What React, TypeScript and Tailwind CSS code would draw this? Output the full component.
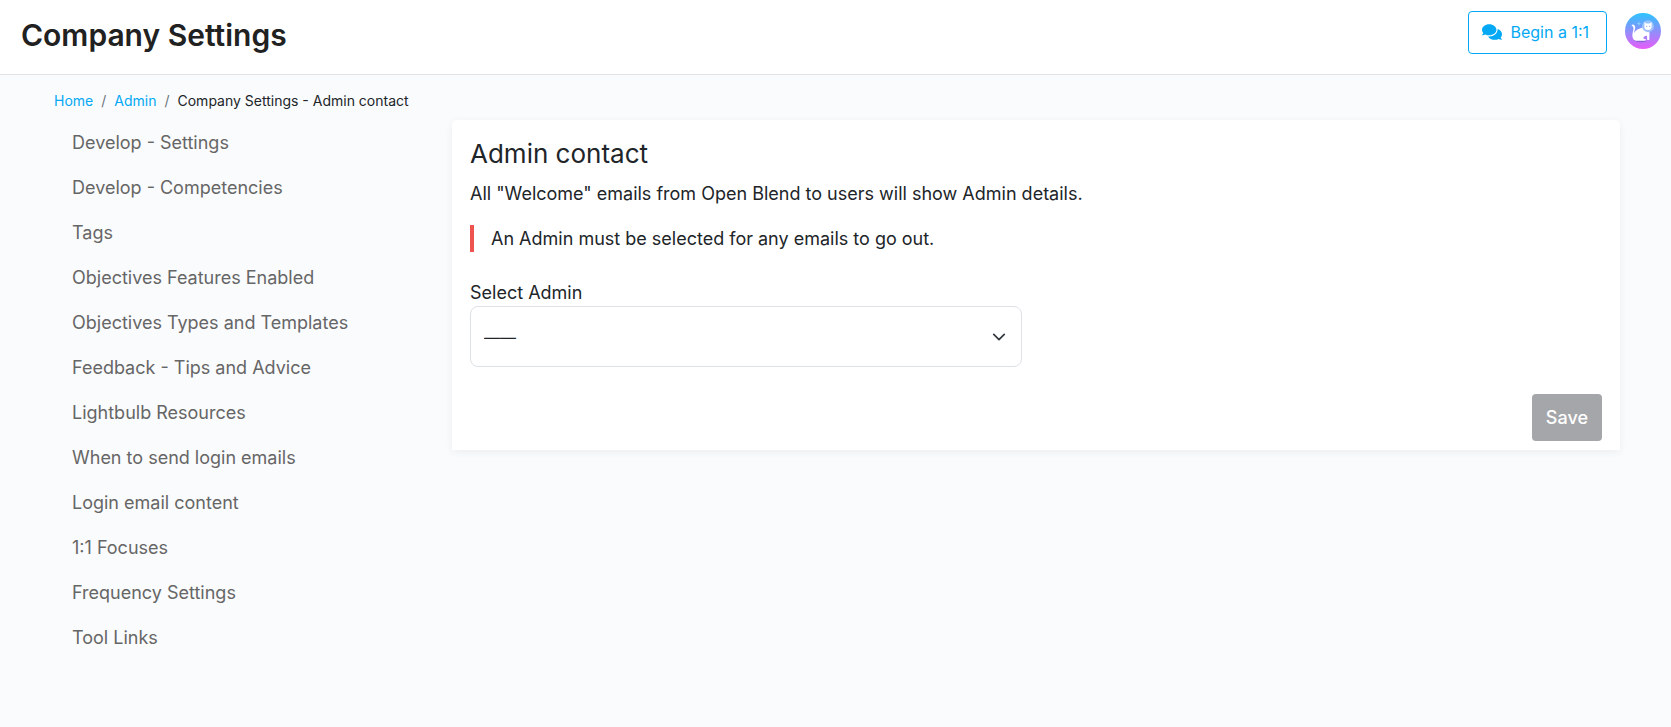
import { FaComments } from "react-icons/fa";

const navItems = [
  "Develop - Settings",
  "Develop - Competencies",
  "Tags",
  "Objectives Features Enabled",
  "Objectives Types and Templates",
  "Feedback - Tips and Advice",
  "Lightbulb Resources",
  "When to send login emails",
  "Login email content",
  "1:1 Focuses",
  "Frequency Settings",
  "Tool Links",
];

function Avatar() {
  return (
    <svg viewBox="0 0 36 36" className="size-9" aria-hidden="true">
      <defs>
        <linearGradient id="sky" x1="0" y1="0" x2="0" y2="1">
          <stop offset="0" stopColor="#2bc4ff" />
          <stop offset="0.5" stopColor="#8d90fa" />
          <stop offset="1" stopColor="#e75cfa" />
        </linearGradient>
      </defs>
      <circle cx="18" cy="18" r="18" fill="url(#sky)" />
      <path d="M8.500 26.500 C10 29.500 16 29.500 21 28.800 L21 27 Z" fill="#5c50b8" opacity="0.5" />
      <path
        d="M6.500 12 C7.500 10.800 10 11.600 10.200 14 C10.300 16.500 9 18 9.200 20 C10.500 16.800 14 15.800 17.500 14.500 C18.500 17 21 19 24.500 19.200 L24.300 27 L22.200 27 L22 22.800 C20 22.600 18.500 23.500 18.300 25.500 L20.800 26.300 C21.300 27 20.900 27.800 20 27.800 L12 27.800 C8.500 27.800 7.200 25 7.400 21.500 C7.600 18.500 8.900 16.500 8.300 14.200 C7.900 13.200 7 13.300 6.500 12 Z"
        fill="#fff"
      />
      <circle cx="23" cy="13.200" r="6" fill="#a9cdff" opacity="0.75" />
      <path
        d="M19.500 9 L21.200 10.600 L24.800 10.600 L26.500 9 L26.700 13.500 C26.700 16 25 17 23 17 C21 17 19.300 16 19.300 13.500 Z"
        fill="#fff"
      />
      <path d="M21 13.300 h1.200 M24 13.300 h1.200" stroke="#8eaef5" strokeWidth="1" />
      <path d="M14 8 L14.600 10 L16.500 10.600 L14.600 11.200 L14 13.200 L13.400 11.200 L11.500 10.600 L13.400 10 Z" fill="#8fd6ff" opacity="0.8" />
    </svg>
  );
}

export default function App() {
  return (
    <div className="min-h-screen bg-[#fafbfd] font-['Inter','Liberation_Sans',sans-serif] text-lg leading-[27px] text-[#212529]">
      <header className="flex items-start justify-between border-b border-[#e3e4e6] bg-white pt-[11px] pr-[10px] pb-[19px] pl-[21px]">
        <h1 className="pt-1 text-[30px] leading-[40px] font-semibold text-[#212121]">Company Settings</h1>
        <div className="flex items-start gap-[18px]">
          <button
            type="button"
            className="flex h-[43px] items-center gap-2 rounded border border-[#03a9f4] bg-white pr-[17px] pb-[2px] pl-[13px] text-base text-[#03a9f4]"
          >
            <FaComments className="size-5" aria-hidden="true" />
            Begin a 1:1
          </button>
          <button type="button" aria-label="Account" className="mt-[2px] rounded-full">
            <Avatar />
          </button>
        </div>
      </header>

      <div className="pt-4 pr-[35px] pl-9">
        <nav aria-label="Breadcrumb" className="pl-[18px]">
          <ol className="flex gap-2 text-sm leading-5">
            <li><a href="#home" className="text-[#03a9f4]">Home</a></li>
            <li aria-hidden="true" className="text-[#6c757d]">/</li>
            <li><a href="#admin" className="text-[#03a9f4]">Admin</a></li>
            <li aria-hidden="true" className="text-[#6c757d]">/</li>
            <li aria-current="page">Company Settings - Admin contact</li>
          </ol>
        </nav>

        <div className="mt-[9px] grid grid-cols-4">
          <nav aria-label="Settings" className="px-9">
            <ul>
              {navItems.map((item) => (
                <li key={item}>
                  <a href="#settings" className="block py-[9px] text-[#666]">{item}</a>
                </li>
              ))}
            </ul>
          </nav>

          <main className="col-span-3 px-4">
            <section className="rounded-t-[5px] bg-white px-[18px] pt-[18px] pb-[9px] shadow-[0_2px_8px_rgba(0,0,0,0.06)]">
              <h2 className="text-[26px] leading-8">Admin contact</h2>
              <p className="mt-[10px]">All "Welcome" emails from Open Blend to users will show Admin details.</p>
              <p className="mt-[18px] border-l-4 border-[#ef5350] pl-[17px]">
                An Admin must be selected for any emails to go out.
              </p>
              <form onSubmit={(e) => e.preventDefault()}>
                <label htmlFor="admin" className="mt-[27px] block">Select Admin</label>
                <div className="relative max-w-[552px]">
                  <select
                    id="admin"
                    className="block h-[61px] w-full appearance-none rounded-lg border border-[#dee2e6] bg-white px-[13px] text-base"
                  >
                    <option>——</option>
                  </select>
                  <svg
                    viewBox="0 0 16 16"
                    aria-hidden="true"
                    className="pointer-events-none absolute top-6 right-4 size-[14px]"
                    fill="none"
                    stroke="#343a40"
                    strokeWidth="2"
                    strokeLinecap="round"
                    strokeLinejoin="round"
                  >
                    <path d="m2 5 6 6 6-6" />
                  </svg>
                </div>
                <div className="mt-[27px] flex justify-end">
                  <button type="submit" className="h-[47px] rounded bg-[#a5a6aa] px-[14px] font-medium text-white">
                    Save
                  </button>
                </div>
              </form>
            </section>
          </main>
        </div>
      </div>
    </div>
  );
}
